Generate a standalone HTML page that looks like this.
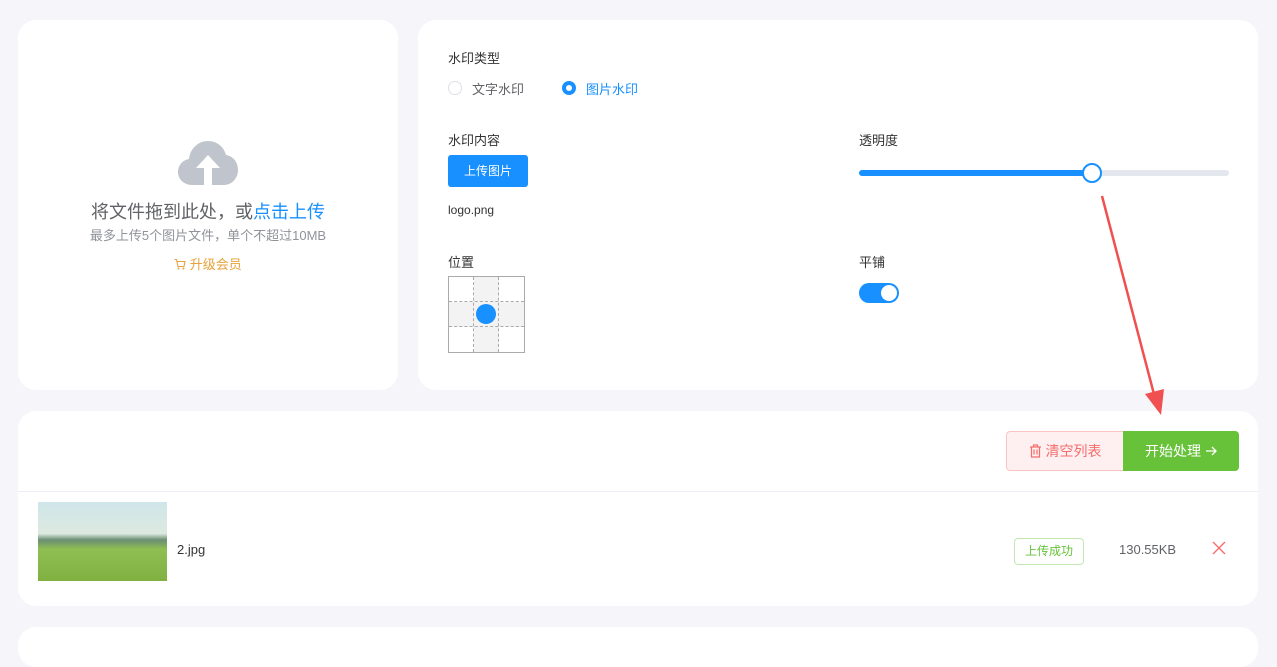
<!DOCTYPE html><html><head><meta charset="utf-8"><style>
*{margin:0;padding:0;box-sizing:border-box}
body{width:1277px;height:630px;background:#f5f5fa;font-family:"Liberation Sans","Noto Sans CJK SC",sans-serif;position:relative;overflow:hidden;color:#333}
.p{position:absolute;background:#fff;border-radius:18px}
.a{position:absolute;white-space:nowrap}
</style></head><body>
<div class="p" style="left:18px;top:20px;width:380px;height:370px"></div>
<div class="p" style="left:418px;top:20px;width:840px;height:370px"></div>
<div class="p" style="left:18px;top:411px;width:1240px;height:195px"></div>
<div class="p" style="left:18px;top:627px;width:1240px;height:40px"></div>
<svg class="a" style="left:178px;top:141px" width="60" height="44" viewBox="0 0 60 44"><path d="M14 44C6 44 0 38 0 31 0 24 5 19 11 18 12 8 20 0 30 0 39 0 46 6 48 14 55 15 60 21 60 29 60 37 54 44 46 44Z" fill="#c0c4cc"/><path d="M30 14 18 27H26V44H34V27H42Z" fill="#fff"/></svg>
<div class="a" style="left:0;width:416px;text-align:center;top:198px;font-size:18px;color:#606266">将文件拖到此处，或<span style="color:#1890ff">点击上传</span></div>
<div class="a" style="left:0;width:416px;text-align:center;top:225px;font-size:13px;color:#909399">最多上传5个图片文件，单个不超过10MB</div>
<div class="a" style="left:0;width:416px;text-align:center;top:254px;font-size:13px;color:#e6a23c"><svg width="12" height="12" viewBox="0 0 12 12" style="vertical-align:-1px"><path d="M0.5 1.5H2.5L4 8.5H10L11 3.5H3" fill="none" stroke="#e6a23c" stroke-width="1.1"/><circle cx="4.5" cy="10.5" r="1" fill="#e6a23c"/><circle cx="9.5" cy="10.5" r="1" fill="#e6a23c"/></svg> 升级会员</div>
<div class="a" style="left:448px;top:48px;font-size:13px">水印类型</div>
<div class="a" style="left:448px;top:81px;width:14px;height:14px;border:1px solid #dcdfe6;border-radius:50%"></div>
<div class="a" style="left:472px;top:79px;font-size:13px;color:#606266">文字水印</div>
<div class="a" style="left:562px;top:81px;width:14px;height:14px;background:#1890ff;border-radius:50%"><div style="margin:4px;width:6px;height:6px;background:#fff;border-radius:50%"></div></div>
<div class="a" style="left:586px;top:79px;font-size:13px;color:#1890ff">图片水印</div>
<div class="a" style="left:448px;top:130px;font-size:13px">水印内容</div>
<div class="a" style="left:448px;top:155px;width:80px;height:32px;background:#1890ff;border-radius:3px;color:#fff;font-size:12px;text-align:center;line-height:32px">上传图片</div>
<div class="a" style="left:448px;top:203px;font-size:12px">logo.png</div>
<div class="a" style="left:448px;top:252px;font-size:13px">位置</div>
<div class="a" style="left:448px;top:276px;width:77px;height:77px;border:1px solid #aaa;background:linear-gradient(90deg,transparent 25px,#f3f3f3 25px,#f3f3f3 50px,transparent 50px),linear-gradient(transparent 25px,#f3f3f3 25px,#f3f3f3 50px,transparent 50px)">
<div style="position:absolute;left:24px;top:0;height:75px;border-left:1px dashed #aaa"></div><div style="position:absolute;left:49px;top:0;height:75px;border-left:1px dashed #aaa"></div>
<div style="position:absolute;top:24px;left:0;width:75px;border-top:1px dashed #aaa"></div><div style="position:absolute;top:49px;left:0;width:75px;border-top:1px dashed #aaa"></div>
<div style="position:absolute;left:27px;top:27px;width:20px;height:20px;border-radius:50%;background:#1890ff"></div></div>
<div class="a" style="left:859px;top:130px;font-size:13px">透明度</div>
<div class="a" style="left:859px;top:170px;width:370px;height:6px;background:#e4e7ed;border-radius:3px"><div style="width:233px;height:6px;background:#1890ff;border-radius:3px"></div></div>
<div class="a" style="left:1082px;top:163px;width:20px;height:20px;border:2px solid #1890ff;background:#fff;border-radius:50%"></div>
<div class="a" style="left:859px;top:252px;font-size:13px">平铺</div>
<div class="a" style="left:859px;top:283px;width:40px;height:20px;background:#1890ff;border-radius:10px"><div style="position:absolute;right:2px;top:2px;width:16px;height:16px;background:#fff;border-radius:50%"></div></div>
<svg class="a" style="left:0;top:0" width="1277" height="630"><line x1="1102" y1="196" x2="1155" y2="398" stroke="#f05050" stroke-width="2.5"/><path d="M1145 394 1161 415 1164 389Z" fill="#f05050"/></svg>
<div class="a" style="left:1006px;top:431px;width:118px;height:40px;background:#fef0f0;border:1px solid #fbc4c4;border-radius:4px 0 0 4px;color:#f56c6c;font-size:14px;line-height:38px;text-align:center"><svg width="13" height="14" viewBox="0 0 13 14" style="vertical-align:-2px;margin-right:4px"><path d="M1 3H12M4.5 3V1H8.5V3M2.5 3V13H10.5V3M5 5.5V10.5M8 5.5V10.5" fill="none" stroke="#f56c6c" stroke-width="1.2"/></svg>清空列表</div>
<div class="a" style="left:1123px;top:431px;width:116px;height:40px;background:#67c23a;border-radius:0 4px 4px 0;color:#fff;font-size:14px;line-height:40px;text-align:center">开始处理 <svg width="12" height="10" viewBox="0 0 12 10" style="vertical-align:0"><path d="M1 5H11M7 1 11 5 7 9" fill="none" stroke="#fff" stroke-width="1.3"/></svg></div>
<div class="a" style="left:18px;top:491px;width:1240px;border-top:1px solid #ebeef5"></div>
<div class="a" style="left:38px;top:502px;width:129px;height:79px;background:linear-gradient(#cfe6ea 0,#dde9e0 40%,#6a8f73 48%,#8fbf52 60%,#7fb040 100%)"></div>
<div class="a" style="left:177px;top:542px;font-size:13px">2.jpg</div>
<div class="a" style="left:1014px;top:538px;width:70px;height:27px;border:1px solid #c2e7b0;border-radius:4px;color:#67c23a;font-size:12px;line-height:25px;text-align:center">上传成功</div>
<div class="a" style="left:1119px;top:542px;font-size:13px;color:#606266">130.55KB</div>
<svg class="a" style="left:1212px;top:541px" width="14" height="14" viewBox="0 0 14 14"><path d="M1 1 13 13M13 1 1 13" stroke="#f56c6c" stroke-width="1.4"/></svg>
</body></html>
